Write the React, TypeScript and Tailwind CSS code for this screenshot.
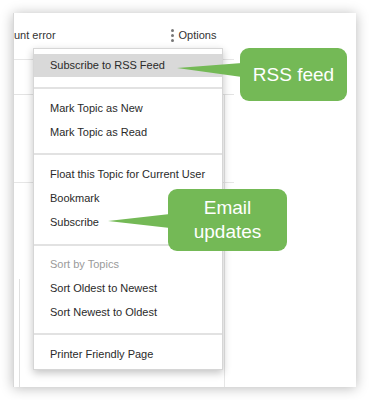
import React from 'react';

const font = { fontFamily: '"Liberation Sans", Arial, sans-serif' };

interface MenuGroup {
  items: { label: string; muted?: boolean; active?: boolean }[];
  className: string;
}

const groups: MenuGroup[] = [
  { items: [{ label: 'Subscribe to RSS Feed', active: true }], className: 'pt-[5px] pb-[10px]' },
  { items: [{ label: 'Mark Topic as New' }, { label: 'Mark Topic as Read' }], className: 'pt-[7px] pb-[9px]' },
  {
    items: [{ label: 'Float this Topic for Current User' }, { label: 'Bookmark' }, { label: 'Subscribe' }],
    className: 'pt-[7px] pb-[10px]',
  },
  {
    items: [
      { label: 'Sort by Topics', muted: true },
      { label: 'Sort Oldest to Newest' },
      { label: 'Sort Newest to Oldest' },
    ],
    className: 'pt-[6px] pb-[9px]',
  },
  { items: [{ label: 'Printer Friendly Page' }], className: 'pt-[7px] pb-[3px]' },
];

const OptionsMenu: React.FC = () => (
  <div className="absolute left-[19px] top-[35px] w-[190px] bg-white border border-[#d6d6d6] shadow-[0_3px_8px_rgba(0,0,0,0.24)]">
    {groups.map((g, gi) => (
      <div key={gi}>
        {gi > 0 && <div className="h-[2px] bg-[#e2e2e2]" />}
        <div className={g.className}>
          {g.items.map(item => (
            <div
              key={item.label}
              className={
                'flex items-center pl-[16px] text-[11px] whitespace-nowrap ' +
                (item.active ? 'h-[23px] bg-[#d9d9d9] ' : 'h-[24px] ') +
                (item.muted ? 'text-[#9a9a9a]' : 'text-[#2a2a2a]')
              }
            >
              {item.label}
            </div>
          ))}
        </div>
      </div>
    ))}
  </div>
);

const Callout: React.FC<{ className: string; children: React.ReactNode }> = ({ className, children }) => (
  <div
    className={
      'absolute flex items-center justify-center text-center text-white text-[19px] leading-[24px] rounded-[9px] bg-[#74b956] ' +
      className
    }
  >
    {children}
  </div>
);

export default function App() {
  return (
    <div className="relative w-[369px] h-[400px] bg-white overflow-hidden pt-[13px] pl-[13px]" style={font}>
      {/* screenshot panel */}
      <div className="relative w-[343px] h-[374px] bg-white border-l border-[#d8d8d8] shadow-[0_1px_12px_rgba(0,0,0,0.28)] flex flex-col">
        <div className="h-[46px] flex items-start pt-[14px] text-[11px] text-[#333]">
          <span className="w-[157px]">unt error</span>
          <span className="flex flex-col gap-[2.5px] mt-[2px] mr-[5px]">
            <span className="w-[2.5px] h-[2.5px] rounded-full bg-[#777]" />
            <span className="w-[2.5px] h-[2.5px] rounded-full bg-[#777]" />
            <span className="w-[2.5px] h-[2.5px] rounded-full bg-[#777]" />
          </span>
          <span>Options</span>
        </div>

        <div className="flex-1 w-[220px] flex flex-col">
          <div className="h-[35px] border-t border-[#e6e6e6]" />
          <div className="h-[88px] border-t border-[#e3e3e3]">
            <div className="w-[211px] h-full border-r border-[#e6e6e6]" />
          </div>
          <div className="flex-1 border-t border-[#e6e6e6]">
            <div className="w-[211px] h-full border-r border-[#e6e6e6] pt-[96px] pl-[5px]">
              <div className="h-full border-l border-[#e0e0e0]" />
            </div>
          </div>
        </div>

        <OptionsMenu />
      </div>

      {/* callouts */}
      <svg className="absolute left-0 top-0" width="369" height="400">
        <polygon points="177,68 242,63 242,77" fill="#74b956" />
        <polygon points="108,221 170,214 170,228" fill="#74b956" />
      </svg>
      <Callout className="left-[240px] top-[48px] w-[107px] h-[53px]">RSS feed</Callout>
      <Callout className="left-[168px] top-[189px] w-[119px] h-[62px]">
        Email
        <br />
        updates
      </Callout>
    </div>
  );
}
